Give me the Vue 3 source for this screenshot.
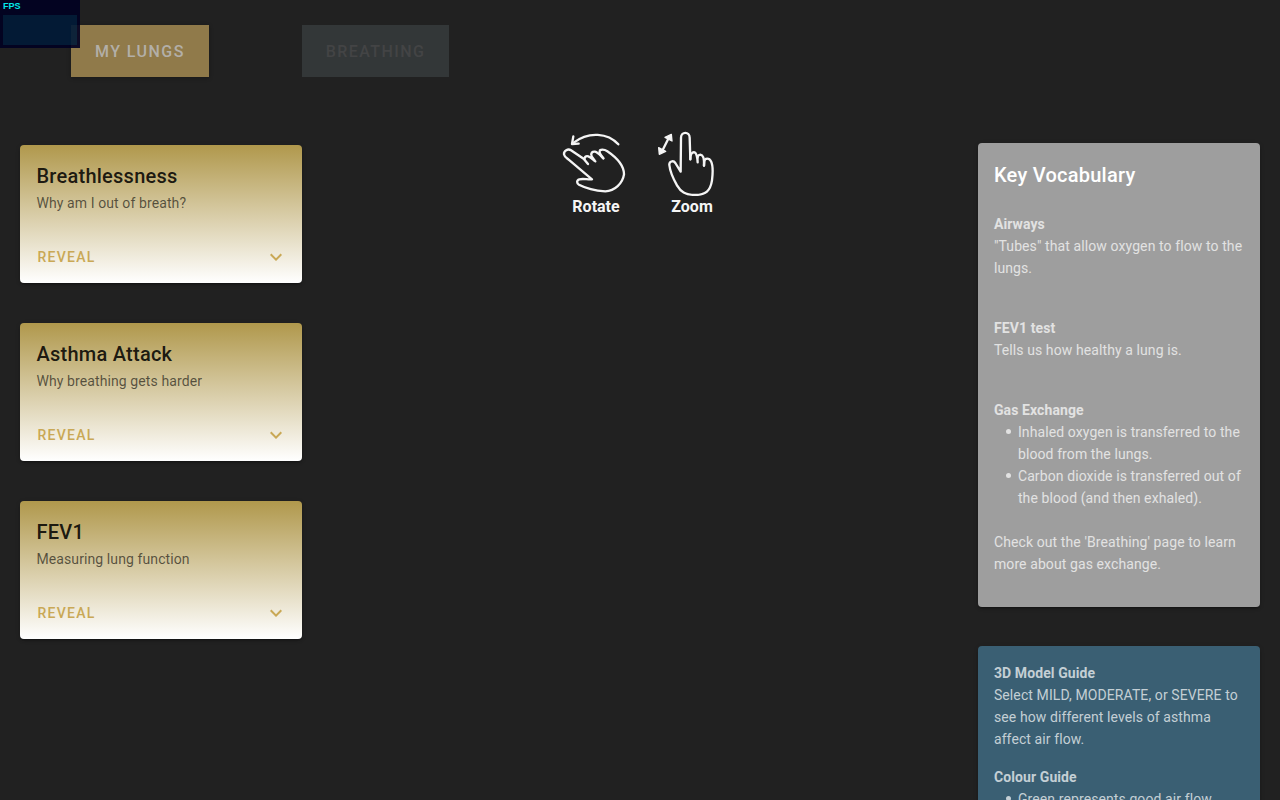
<script setup>
import { ref } from 'vue'

const tabs = [
  { id: 'lungs', label: 'My Lungs' },
  { id: 'breathing', label: 'Breathing' },
]
const active = ref('lungs')

const topics = [
  { title: 'Breathlessness', subtitle: 'Why am I out of breath?' },
  { title: 'Asthma Attack', subtitle: 'Why breathing gets harder' },
  { title: 'FEV1', subtitle: 'Measuring lung function' },
]
</script>

<template>
  <div class="page">
    <div class="stats" aria-label="Frame rate">
      <span class="stats-label">FPS</span>
      <div class="stats-graph"></div>
    </div>

    <nav class="tabs">
      <button
        v-for="tab in tabs"
        :key="tab.id"
        type="button"
        class="tab"
        :class="{ active: active === tab.id }"
        @click="active = tab.id"
      >{{ tab.label }}</button>
    </nav>

    <main class="columns">
      <section class="topics">
        <article v-for="topic in topics" :key="topic.title" class="card topic">
          <div class="topic-head">
            <h2 class="title">{{ topic.title }}</h2>
            <p class="subtitle">{{ topic.subtitle }}</p>
          </div>
          <div class="actions">
            <button type="button" class="reveal">Reveal</button>
            <button type="button" class="toggle" :aria-label="'Expand ' + topic.title">
              <svg viewBox="0 0 24 24" width="24" height="24" aria-hidden="true">
                <path fill="currentColor" d="M7.41,8.58L12,13.17L16.59,8.58L18,10L12,16L6,10L7.41,8.58Z" />
              </svg>
            </button>
          </div>
        </article>
      </section>

      <section class="gestures">
        <figure class="gesture">
          <svg viewBox="60 30 216 198" aria-hidden="true">
            <g fill="none" stroke="#f5f5f5" stroke-width="7" stroke-linecap="round" stroke-linejoin="round">
              <path d="M235 73C204 39 146 33 101 68" />
              <path d="M100 49L96 72L116 71" />
              <path d="M133 118L93 91C84 85 71 92 72 103C73 110 80 114 86 119L156 178C142 179 129 175 118 178C109 181 110 190 117 194C138 205 170 212 196 214C224 213 248 190 252 163C252 132 224 109 202 94C192 87 180 88 179 93C177 99 184 108 190 115" />
              <path d="M144 132L134 120C132 112 137 107 145 109C153 112 161 121 166 124L155 109C151 99 157 94 165 95C174 97 181 106 190 115" />
            </g>
          </svg>
          <figcaption>Rotate</figcaption>
        </figure>
        <figure class="gesture">
          <svg viewBox="348 30 216 198" aria-hidden="true">
            <g fill="none" stroke="#f5f5f5" stroke-width="7" stroke-linecap="round" stroke-linejoin="round">
              <path d="M451 118L449 53C449 34 423 34 423 53L422 155L406 129C400 120 387 124 388 135C390 153 399 175 411 196C422 215 435 224 466 225C497 224 511 213 516 181C519 157 519 136 513 124C508 113 494 113 493 124L492 137" />
              <path d="M451 118C450 102 457 95 464 97C471 100 472 111 473 127C471 112 474 104 481 104C490 105 493 119 492 137" />
              <path d="M388 50L365 96" />
            </g>
            <path fill="#f5f5f5" stroke="#f5f5f5" stroke-width="4" stroke-linejoin="round" d="M394 43L396 63L375 52ZM358 103L356 83L377 94Z" />
          </svg>
          <figcaption>Zoom</figcaption>
        </figure>
      </section>

      <aside class="info">
        <article class="card vocabulary">
          <h2 class="title">Key Vocabulary</h2>
          <div class="entry">
            <h3>Airways</h3>
            <p>"Tubes" that allow oxygen to flow to the lungs.</p>
          </div>
          <div class="entry">
            <h3>FEV1 test</h3>
            <p>Tells us how healthy a lung is.</p>
          </div>
          <div class="entry">
            <h3>Gas Exchange</h3>
            <ul>
              <li>Inhaled oxygen is transferred to the blood from the lungs.</li>
              <li>Carbon dioxide is transferred out of the blood (and then exhaled).</li>
            </ul>
            <p class="note">Check out the 'Breathing' page to learn more about gas exchange.</p>
          </div>
        </article>

        <article class="card guide">
          <div>
            <h3>3D Model Guide</h3>
            <p>Select MILD, MODERATE, or SEVERE to see how different levels of asthma affect air flow.</p>
          </div>
          <div>
            <h3>Colour Guide</h3>
            <ul>
              <li>Green represents good air flow.</li>
            </ul>
          </div>
        </article>
      </aside>
    </main>
  </div>
</template>

<style>
body {
  margin: 0;
  background: #212121;
}
</style>

<style scoped>
.page {
  position: relative;
  box-sizing: border-box;
  height: 100vh;
  overflow-y: auto;
  scrollbar-width: none;
  padding-top: 25px;
  background: #212121;
  font-family: Roboto, "Liberation Sans", sans-serif;
  font-size: 14px;
  line-height: 22px;
  letter-spacing: 0.007em;
}

h2,
h3,
p,
ul,
figure {
  margin: 0;
}

button {
  border: 0;
  font-family: inherit;
  font-weight: 500;
  text-transform: uppercase;
  letter-spacing: 0.09em;
  cursor: pointer;
}

.stats {
  position: absolute;
  top: 0;
  left: 0;
  z-index: 2;
  box-sizing: border-box;
  width: 80px;
  height: 48px;
  padding: 2px 3px 3px;
  display: flex;
  flex-direction: column;
  justify-content: space-between;
  background: #000022;
  opacity: 0.9;
}

.stats-label {
  color: #00ffff;
  font-family: "Liberation Sans", sans-serif;
  font-size: 9px;
  font-weight: 700;
  line-height: 9px;
  letter-spacing: normal;
}

.stats-graph {
  height: 30px;
  background: #001a38;
}

.tabs {
  display: flex;
  gap: 93px;
  padding: 0 71px;
}

.tab {
  height: 52px;
  padding: 0 24px;
  background: #333738;
  color: #434445;
  font-size: 16px;
}

.tab.active {
  background: #907a4a;
  color: #b3afa8;
  box-shadow: 0 1px 4px rgba(0, 0, 0, 0.3);
}

.columns {
  display: grid;
  grid-template-columns: 22vw 1fr 22vw;
  align-items: start;
  padding: 66px 1.6% 40px;
}

.card {
  border-radius: 4px;
  box-shadow: 0 3px 1px -2px rgba(0, 0, 0, 0.2), 0 2px 2px rgba(0, 0, 0, 0.14), 0 1px 5px rgba(0, 0, 0, 0.12);
}

.title {
  font-size: 20px;
  font-weight: 500;
  line-height: 32px;
  letter-spacing: 0.0125em;
}

.topics {
  display: flex;
  flex-direction: column;
  gap: 40px;
  padding-top: 2px;
}

.topic {
  background: linear-gradient(#b0984c, #ffffff);
}

.topic-head {
  padding: 15px 16px;
}

.topic .title {
  color: rgba(0, 0, 0, 0.87);
}

.subtitle {
  color: rgba(0, 0, 0, 0.6);
}

.actions {
  display: flex;
  justify-content: space-between;
  align-items: center;
  padding: 10px 8px 8px;
}

.reveal,
.toggle {
  height: 36px;
  background: transparent;
  color: #c9a855;
  font-size: 14px;
}

.reveal {
  padding: 0 9px;
}

.toggle {
  display: flex;
  align-items: center;
  justify-content: center;
  width: 36px;
  padding: 0;
}

.gestures {
  display: flex;
  justify-content: center;
  gap: 24px;
  padding-left: 8px;
}

.gesture {
  display: flex;
  flex-direction: column;
  align-items: center;
  margin-top: -13px;
}

.gesture svg {
  width: 72px;
  height: 66px;
}

.gesture figcaption {
  color: #f5f5f5;
  font-size: 16px;
  font-weight: 700;
  letter-spacing: normal;
}

.info {
  display: flex;
  flex-direction: column;
  gap: 39px;
}

.vocabulary {
  padding: 16px 16px 32px;
  background: #9e9e9e;
  color: #e2e2e2;
}

.vocabulary .title {
  color: #ffffff;
}

h3 {
  font-size: 14px;
  font-weight: 700;
  line-height: 22px;
}

.entry {
  margin-top: 38px;
}

.title + .entry {
  margin-top: 22px;
}

ul {
  padding-left: 24px;
  list-style: none;
}

li::before {
  content: "";
  display: inline-block;
  width: 5px;
  height: 5px;
  margin: 0 7px 3px -12px;
  border-radius: 50%;
  background: currentColor;
}

.note {
  margin-top: 22px;
}

.guide {
  display: flex;
  flex-direction: column;
  gap: 16px;
  padding: 16px;
  background: #3a5f73;
  color: #c4cfd5;
}
</style>
